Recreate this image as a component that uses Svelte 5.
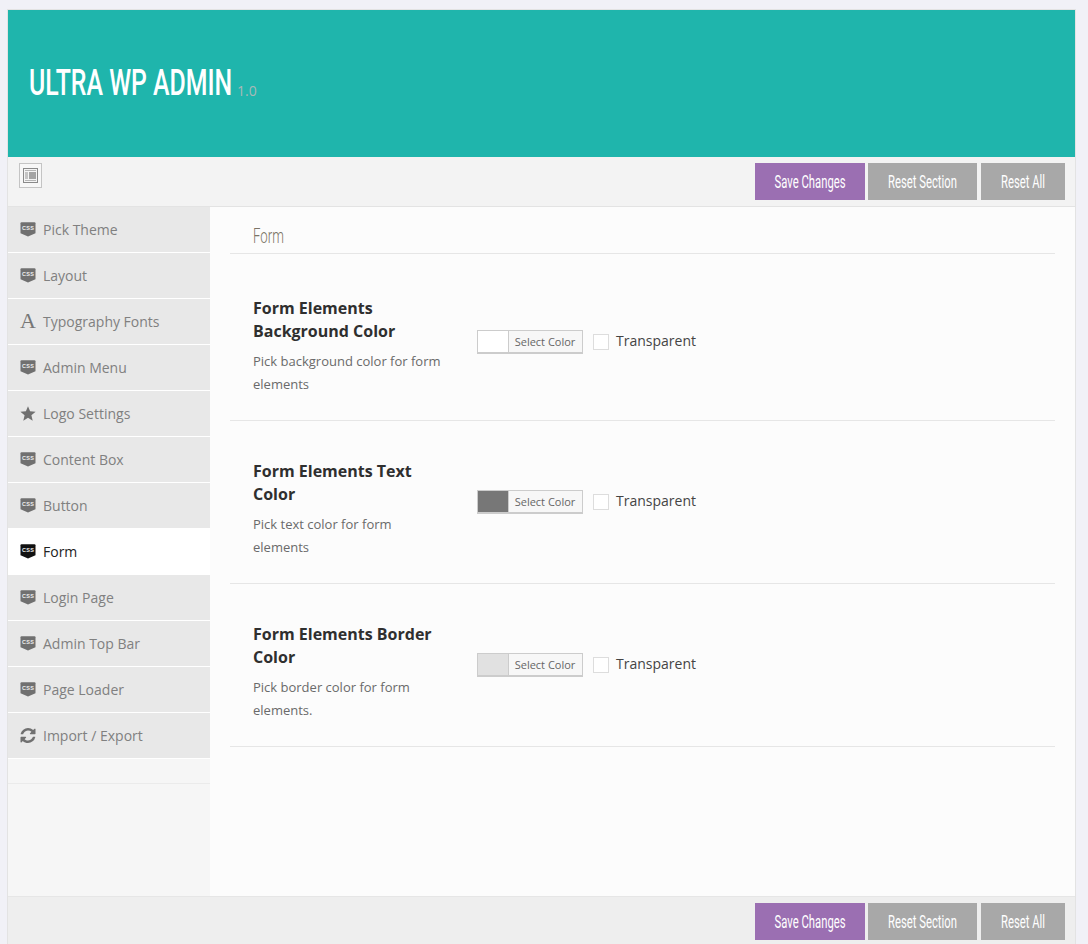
<script>
	const menu = [
		{ label: 'Pick Theme', icon: 'css' },
		{ label: 'Layout', icon: 'css' },
		{ label: 'Typography Fonts', icon: 'font' },
		{ label: 'Admin Menu', icon: 'css' },
		{ label: 'Logo Settings', icon: 'star' },
		{ label: 'Content Box', icon: 'css' },
		{ label: 'Button', icon: 'css' },
		{ label: 'Form', icon: 'css', active: true },
		{ label: 'Login Page', icon: 'css' },
		{ label: 'Admin Top Bar', icon: 'css' },
		{ label: 'Page Loader', icon: 'css' },
		{ label: 'Import / Export', icon: 'sync' }
	];

	const fields = [
		{ title: 'Form Elements Background Color', desc: 'Pick background color for form elements', color: '#ffffff' },
		{ title: 'Form Elements Text Color', desc: 'Pick text color for form elements', color: '#777777' },
		{ title: 'Form Elements Border Color', desc: 'Pick border color for form elements.', color: '#e1e1e1' }
	];
</script>

{#snippet buttons()}
	<div class="buttons">
		<button class="save"><span>Save Changes</span></button>
		<button class="reset section"><span>Reset Section</span></button>
		<button class="reset all"><span>Reset All</span></button>
	</div>
{/snippet}

<div class="wrap">
	<header>
		<h1><span class="name">ULTRA WP ADMIN</span></h1>
		<span class="version">1.0</span>
	</header>

	<div class="toolbar">
		<div class="expand">
			<svg width="15" height="15" viewBox="0 0 15 15">
				<rect x="0.5" y="0.5" width="14" height="14" fill="#f4f4f4" stroke="#8a8a8a" />
				<rect x="2" y="2" width="11" height="1" fill="#b5b5b5" />
				<rect x="2" y="12" width="11" height="1" fill="#b5b5b5" />
				<rect x="2" y="4" width="3" height="7" fill="#c4c4c4" />
				<rect x="6" y="4" width="7" height="7" fill="#a4a4a4" />
			</svg>
		</div>
		{@render buttons()}
	</div>

	<div class="body">
		<nav>
			<ul>
				{#each menu as item}
					<li class:active={item.active}>
						<span class="icon">
							{#if item.icon === 'css'}
								<svg width="16" height="15" viewBox="0 0 16 15">
									<path d="M0.5 1.2 Q0.5 0.3 1.5 0.3 H14.5 Q15.5 0.3 15.5 1.2 V11.2 L8 14.4 L0.5 11.2 Z" fill={item.active ? '#111' : '#707070'} />
									<text x="8" y="8.2" text-anchor="middle" textLength="12" class="css">CSS</text>
								</svg>
							{:else if item.icon === 'font'}
								<span class="glyph-a">A</span>
							{:else if item.icon === 'star'}
								<svg width="16" height="15" viewBox="0 0 16 15">
									<path d="M8 0.2 L10.1 5.3 L15.6 5.7 L11.4 9.3 L12.7 14.7 L8 11.8 L3.3 14.7 L4.6 9.3 L0.4 5.7 L5.9 5.3 Z" fill="#707070" />
								</svg>
							{:else}
								<svg width="16" height="15" viewBox="0 0 1536 1536">
									<path fill="#707070" d="M1511 928q0 5-1 7-64 268-268 434.500t-478 166.500q-146 0-282.500-55t-243.500-157l-129 129q-19 19-45 19t-45-19-19-45v-448q0-26 19-45t45-19h448q26 0 45 19t19 45-19 45l-137 137q71 66 161 102t187 36q134 0 250-65t186-179q11-17 53-117 8-23 30-23h192q13 0 22.500 9.500t9.500 22.500zM1536 128v448q0 26-19 45t-45 19h-448q-26 0-45-19t-19-45 19-45l138-138q-148-137-349-137-134 0-250 65t-186 179q-11 17-53 117-8 23-30 23h-199q-13 0-22.500-9.500t-9.500-22.500v-7q65-268 270-434.500t480-166.500q146 0 284 55.500t245 156.500l130-129q19-19 45-19t45 19 19 45z" />
								</svg>
							{/if}
						</span>
						<span>{item.label}</span>
					</li>
				{/each}
			</ul>
			<div class="nav-spacer"></div>
		</nav>

		<main>
			<h2><span>Form</span></h2>
			{#each fields as field}
				<section class="row">
					<div class="info">
						<h3>{field.title}</h3>
						<p>{field.desc}</p>
					</div>
					<div class="control">
						<div class="picker">
							<span class="swatch" style="background: {field.color}"></span>
							<span class="pick-label">Select Color</span>
						</div>
						<span class="check"></span>
						<span class="transparent">Transparent</span>
					</div>
				</section>
			{/each}
		</main>
	</div>

	<footer>
		{@render buttons()}
	</footer>
</div>

<style>
	:global(body) {
		background: #f1f1f7;
		font-family: "Open Sans", sans-serif;
	}
	.wrap {
		margin: 9px 12px 0 7px;
		border: 1px solid #e3e3e3;
		border-bottom: 0;
		height: 935px;
		display: flex;
		flex-direction: column;
		overflow: hidden;
		box-sizing: border-box;
	}
	header {
		height: 147px;
		flex: none;
		background: #1fb5ac;
		display: flex;
		align-items: center;
		padding: 0 0 0 21px;
		box-sizing: border-box;
	}
	h1 {
		margin: -6px 0 0;
		width: 204px;
		height: 44px;
		font-size: 37px;
		line-height: 44px;
		font-weight: 500;
		color: #fff;
		white-space: nowrap;
	}
	.name {
		display: inline-block;
		font-family: "Roboto", sans-serif;
		transform: scaleX(0.672);
		transform-origin: left center;
	}
	.version {
		font-size: 14px;
		color: #a9b9b7;
		margin: 13px 0 0 4px;
	}
	.toolbar {
		height: 50px;
		flex: none;
		background: #f3f3f3;
		border-bottom: 1px solid #e3e3e3;
		box-sizing: border-box;
		display: flex;
		justify-content: space-between;
		align-items: flex-start;
		padding: 6px 10px 0 11px;
	}
	.expand {
		width: 23px;
		height: 25px;
		border: 1px solid #c4c4c4;
		box-sizing: border-box;
		display: flex;
		align-items: center;
		justify-content: center;
		background: #f7f7f7;
	}
	.buttons {
		display: flex;
		gap: 3px;
	}
	button {
		height: 37px;
		border: 0;
		padding: 0;
		color: #fff;
		font-family: "Roboto", sans-serif;
		font-size: 17.5px;
		font-weight: 400;
		cursor: pointer;
		overflow: hidden;
	}
	button span {
		display: block;
		white-space: nowrap;
		transform: scaleX(0.645);
	}
	.save {
		width: 110px;
		background: #9b6fb2;
	}
	.reset {
		background: #a8a8a8;
	}
	.section {
		width: 109px;
	}
	.all {
		width: 84px;
		margin-left: 1px;
	}
	.body {
		flex: 1;
		display: flex;
		min-height: 0;
	}
	nav {
		width: 202px;
		flex: none;
		background: #f6f6f6;
	}
	ul {
		list-style: none;
		margin: 0;
		padding: 0;
	}
	li {
		height: 46px;
		box-sizing: border-box;
		background: #e8e8e8;
		border-bottom: 1px solid #fff;
		display: flex;
		align-items: center;
		padding: 0 0 1px 12px;
		font-size: 14px;
		color: #808080;
	}
	li.active {
		background: #fff;
		color: #222;
	}
	.icon {
		width: 23px;
		height: 16px;
		display: flex;
		align-items: center;
		flex: none;
	}
	.css {
		font-family: "Liberation Sans", sans-serif;
		font-size: 5.5px;
		font-weight: 700;
		fill: #eee;
	}
	.glyph-a {
		font-family: "Liberation Serif", serif;
		font-size: 22px;
		line-height: 16px;
		color: #777;
	}
	.nav-spacer {
		height: 24px;
		border-bottom: 1px solid #ebebeb;
	}
	main {
		flex: 1;
		background: #fcfcfc;
		padding: 0 20px;
	}
	h2 {
		margin: 0;
		height: 47px;
		border-bottom: 1px solid #e6e6e6;
		box-sizing: border-box;
		padding: 18px 0 0 23px;
		font-size: 20px;
		line-height: 22px;
		color: #7b7466;
		font-family: "Roboto", sans-serif;
	}
	h2 span {
		display: inline-block;
		font-weight: 300;
		transform: scaleX(0.66);
		transform-origin: left center;
	}
	.row {
		display: flex;
		align-items: flex-start;
		height: 163px;
		box-sizing: border-box;
		padding: 39px 0 0 23px;
		border-bottom: 1px solid #e6e6e6;
	}
	.row:first-of-type {
		height: 167px;
		padding-top: 43px;
	}
	.info {
		width: 224px;
		flex: none;
		padding-right: 30px;
		box-sizing: border-box;
	}
	h3 {
		margin: 0 0 7px;
		font-size: 16px;
		line-height: 23px;
		font-weight: 700;
		color: #2f2f2f;
	}
	p {
		margin: 0;
		font-size: 13px;
		line-height: 23px;
		color: #6a6a6a;
	}
	.control {
		display: flex;
		align-items: center;
		margin-top: 30px;
	}
	.row:first-of-type .control {
		margin-top: 33px;
	}
	.picker {
		width: 106px;
		height: 24px;
		box-sizing: border-box;
		border: 1px solid #ccc;
		border-bottom-width: 2px;
		display: flex;
		background: #f7f7f7;
	}
	.swatch {
		width: 30px;
		border-right: 1px solid #ccc;
		flex: none;
	}
	.pick-label {
		flex: 1;
		text-align: center;
		font-size: 11px;
		line-height: 22px;
		color: #666;
		margin-left: -1px;
	}
	.check {
		width: 16px;
		height: 16px;
		box-sizing: border-box;
		border: 1px solid #ddd;
		background: #fff;
		margin: 0 6px 0 10px;
	}
	.transparent {
		font-size: 14px;
		color: #444;
		margin: -3px 0 0 1px;
	}
	footer {
		height: 48px;
		flex: none;
		background: #eee;
		border-top: 1px solid #e6e6e6;
		box-sizing: border-box;
		display: flex;
		justify-content: flex-end;
		padding: 6px 10px 0 0;
	}
</style>
